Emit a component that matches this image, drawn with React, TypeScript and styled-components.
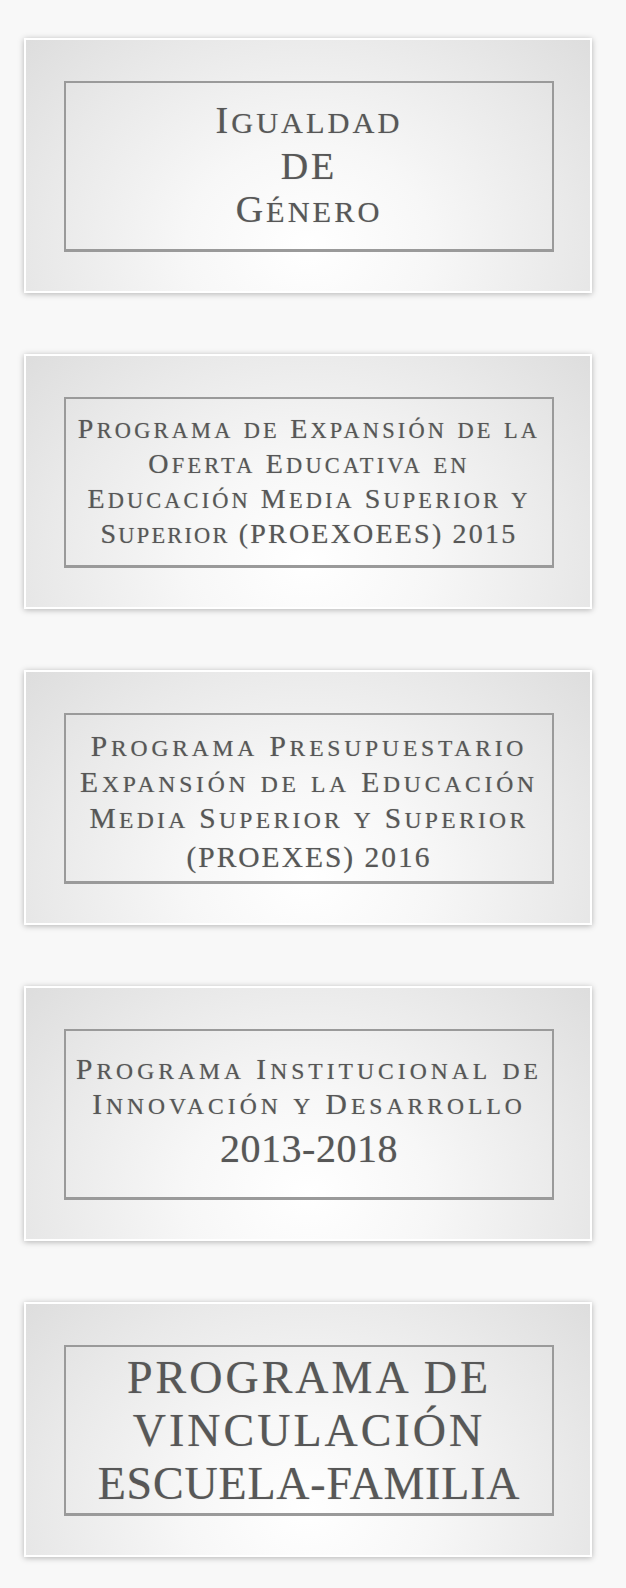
import React from "react";
import styled, { createGlobalStyle } from "styled-components";

const GlobalStyle = createGlobalStyle`
  html, body {
    margin: 0;
    padding: 0;
    background: #f8f8f8;
  }
  body {
    font-family: "Liberation Serif", "Times New Roman", serif;
  }
`;

const Page = styled.main`
  display: flex;
  flex-direction: column;
  gap: 61px;
  padding: 38px 34px 31px 24px;
  background: #f8f8f8;
`;

const Card = styled.a`
  display: flex;
  box-sizing: border-box;
  width: 568px;
  height: 255px;
  border: 2px solid #ffffff;
  padding: 41px 36px 39px 38px;
  text-decoration: none;
  background: radial-gradient(
    ellipse 72% 135% at 50% 82%,
    #ffffff 0%,
    #f7f7f7 30%,
    #e9e9e9 65%,
    #dadada 100%
  );
  box-shadow: 0 1px 6px rgba(0, 0, 0, 0.28);
`;

const Frame = styled.div<{ $shift?: number }>`
  flex: 1;
  display: flex;
  flex-direction: column;
  align-items: center;
  justify-content: center;
  padding-top: ${(p) => p.$shift ?? 0}px;
  border: 2px solid #9a9a9a;
  border-bottom-width: 3px;
`;

const Line = styled.span<{ $size: number; $lh: number; $ls: number }>`
  display: block;
  font-family: "Liberation Serif", "Times New Roman", serif;
  font-size: ${(p) => p.$size}px;
  line-height: ${(p) => p.$lh}px;
  letter-spacing: ${(p) => p.$ls}px;
  color: #575757;
  text-align: center;
  white-space: nowrap;
  text-shadow: 0 0 1px rgba(0, 0, 0, 0.3);
`;

const Small = styled.span`
  font-size: 0.8em;
`;

function SmallCaps({ text }: { text: string }) {
  const parts = text.split(/([a-záéíóúñü]+)/);
  return (
    <>
      {parts.map((p, i) =>
        /^[a-záéíóúñü]+$/.test(p) ? (
          <Small key={i}>{p.toUpperCase()}</Small>
        ) : (
          <React.Fragment key={i}>{p}</React.Fragment>
        )
      )}
    </>
  );
}

type L = { text: string; size: number; lh: number; ls: number };
type C = { shift?: number; lines: L[] };

const cards: C[] = [
  {
    lines: [
      { text: "Igualdad", size: 38, lh: 43, ls: 3 },
      { text: "DE", size: 38, lh: 43, ls: 3 },
      { text: "Género", size: 38, lh: 43, ls: 3 },
    ],
  },
  {
    lines: [
      { text: "Programa de Expansión de la", size: 28, lh: 33, ls: 3.2 },
      { text: "Oferta Educativa en", size: 28, lh: 33, ls: 3.2 },
      { text: "Educación Media Superior y", size: 28, lh: 33, ls: 3.1 },
      { text: "Superior (PROEXOEES) 2015", size: 28, lh: 33, ls: 2.2 },
    ],
  },
  {
    shift: 10,
    lines: [
      { text: "Programa Presupuestario", size: 29.5, lh: 34, ls: 3.8 },
      { text: "Expansión de la Educación", size: 29.5, lh: 34, ls: 3.8 },
      { text: "Media Superior y Superior", size: 29.5, lh: 34, ls: 3.3 },
      { text: "(PROEXES) 2016", size: 29.5, lh: 40, ls: 2 },
    ],
  },
  {
    shift: -2,
    lines: [
      { text: "Programa Institucional de", size: 29.5, lh: 33, ls: 4 },
      { text: "Innovación y Desarrollo", size: 29.5, lh: 33, ls: 4 },
      { text: "2013-2018", size: 40, lh: 52, ls: 0.5 },
    ],
  },
  {
    lines: [
      { text: "PROGRAMA DE", size: 46, lh: 53, ls: 3 },
      { text: "VINCULACIÓN", size: 46, lh: 53, ls: 3 },
      { text: "ESCUELA-FAMILIA", size: 46, lh: 53, ls: 0.8 },
    ],
  },
];

export default function App() {
  return (
    <>
      <GlobalStyle />
      <Page>
        {cards.map((c, i) => (
          <Card key={i} href="#">
            <Frame $shift={c.shift}>
              {c.lines.map((l, j) => (
                <Line key={j} $size={l.size} $lh={l.lh} $ls={l.ls}>
                  <SmallCaps text={l.text} />
                </Line>
              ))}
            </Frame>
          </Card>
        ))}
      </Page>
    </>
  );
}
